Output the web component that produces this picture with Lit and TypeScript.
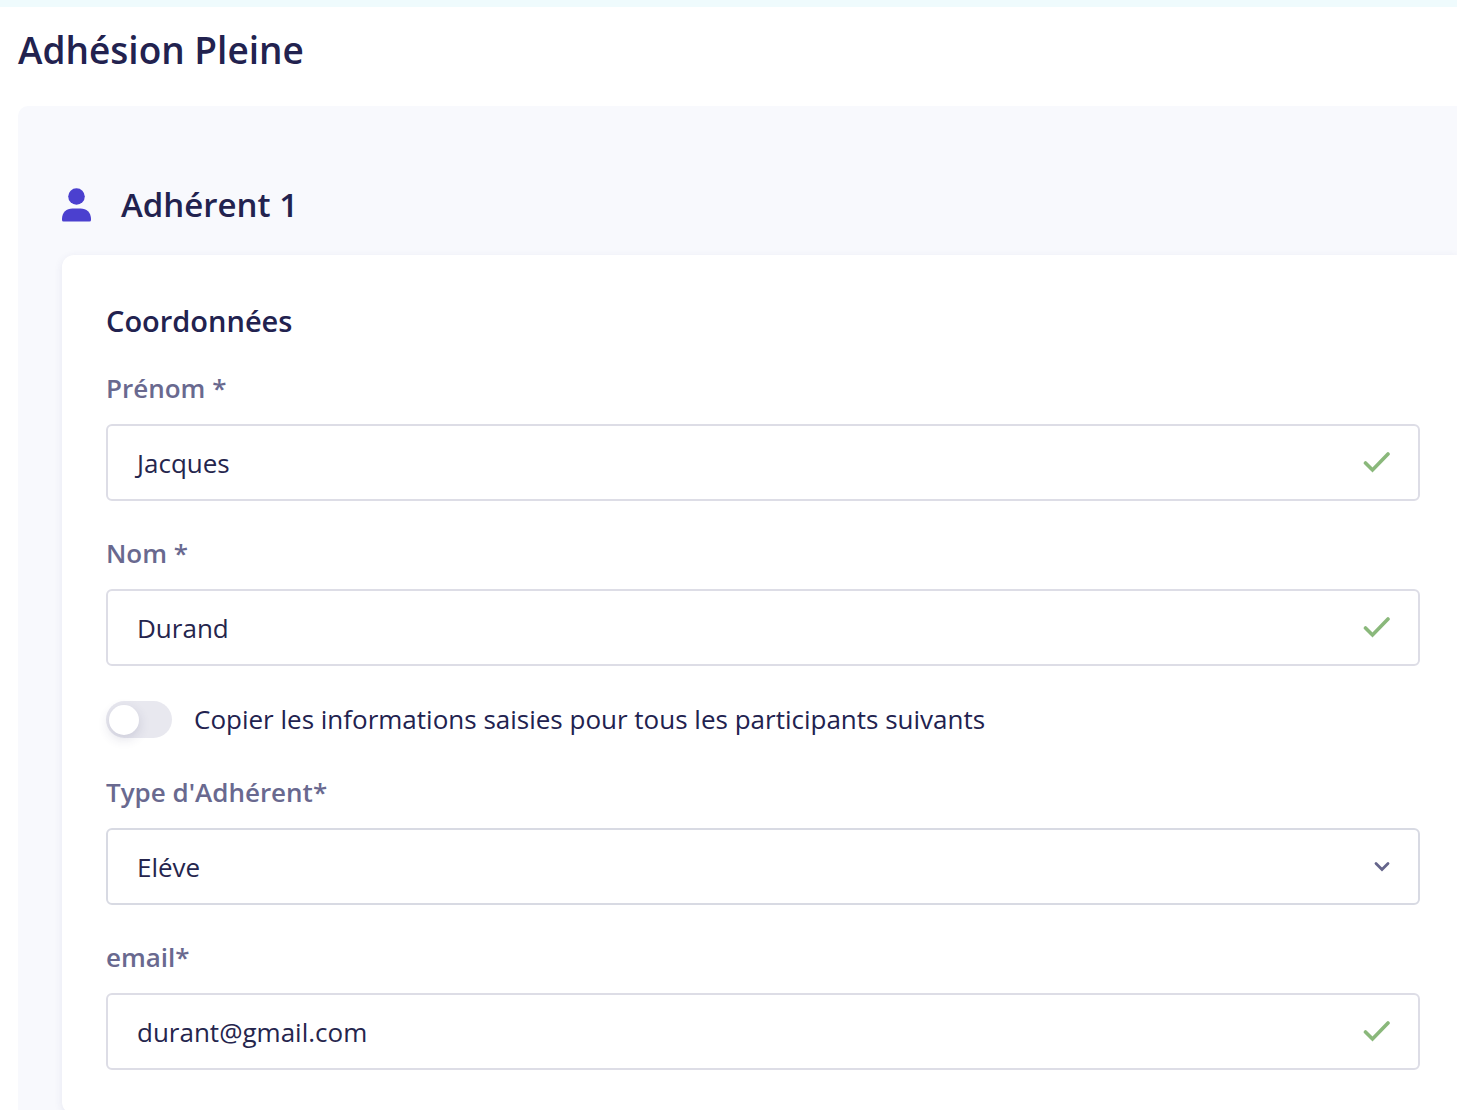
import { LitElement, html, css } from "lit";
import { customElement, property } from "lit/decorators.js";

@customElement("text-field")
class TextField extends LitElement {
  @property() label = "";
  @property() value = "";
  @property() type = "text";

  static styles = css`
    :host {
      display: block;
    }
    .label {
      display: block;
      margin-bottom: 18px;
      color: #69698f;
      font-weight: 600;
      line-height: 35px;
    }
    .box {
      display: flex;
      align-items: center;
      box-sizing: border-box;
      height: 77px;
      padding: 0 27px 0 25px;
      border: 2px solid #dddde6;
      border-radius: 6px;
      background: #fff;
    }
    .input {
      flex: 1;
      min-width: 0;
      padding: 0;
      border: 0;
      outline: 0;
      background: transparent;
      color: #25254d;
      font: inherit;
      line-height: 36px;
      text-indent: 4px;
    }
    .check {
      flex: none;
      width: 28px;
      height: 28px;
    }
  `;

  render() {
    return html`
      <label class="label" for="input">${this.label}</label>
      <div class="box">
        <input class="input" id="input" type=${this.type} .value=${this.value} />
        <svg class="check" viewBox="0 0 28 28" aria-hidden="true">
          <path
            d="M2.5 14 L9.5 21 L25 5"
            fill="none"
            stroke="#8ab87b"
            stroke-width="3.6"
            stroke-linecap="round"
          />
        </svg>
      </div>
    `;
  }
}

@customElement("select-field")
class SelectField extends LitElement {
  @property() label = "";
  @property({ attribute: false }) options: string[] = [];

  static styles = css`
    :host {
      display: block;
    }
    .label {
      display: block;
      margin-bottom: 18px;
      color: #69698f;
      font-weight: 600;
      line-height: 35px;
    }
    .box {
      display: grid;
      align-items: center;
    }
    .select {
      grid-area: 1 / 1;
      appearance: none;
      box-sizing: border-box;
      width: 100%;
      height: 77px;
      padding: 0 60px 0 29px;
      border: 2px solid #d8dae3;
      border-radius: 6px;
      background: #fff;
      color: #25254d;
      font: inherit;
    }
    .chevron {
      grid-area: 1 / 1;
      justify-self: end;
      width: 16px;
      height: 16px;
      margin-right: 30px;
      pointer-events: none;
    }
  `;

  render() {
    return html`
      <label class="label" for="select">${this.label}</label>
      <div class="box">
        <select class="select" id="select">
          ${this.options.map((o) => html`<option>${o}</option>`)}
        </select>
        <svg class="chevron" viewBox="0 0 16 16" aria-hidden="true">
          <path
            d="M2 4.5 L8 10.5 L14 4.5"
            fill="none"
            stroke="#65658b"
            stroke-width="2.8"
            stroke-linecap="round"
          />
        </svg>
      </div>
    `;
  }
}

@customElement("app-root")
class AppRoot extends LitElement {
  static styles = css`
    :host {
      display: block;
      overflow: hidden;
      min-height: 100vh;
      background: #fff;
      color: #22224f;
      font-family: "Open Sans", "Noto Sans", sans-serif;
      font-size: 26px;
    }
    .strip {
      height: 7px;
      background: #effbfd;
    }
    .title {
      margin: 0;
      padding: 18px 18px 31px;
      font-size: 37px;
      font-weight: 600;
      line-height: 50px;
    }
    .panel {
      margin-left: 18px;
      padding: 76px 0 44px 44px;
      border-top-left-radius: 10px;
      background: #f8f9fd;
    }
    .person {
      display: flex;
      align-items: center;
      gap: 30px;
      margin-bottom: 27px;
    }
    .avatar {
      width: 29px;
      height: 34px;
    }
    .name {
      margin: 0;
      font-size: 33px;
      font-weight: 600;
      line-height: 46px;
    }
    .card {
      display: flex;
      flex-direction: column;
      gap: 35px;
      padding: 44px 37px 44px 44px;
      border-radius: 12px 0 0 12px;
      background: #fff;
      box-shadow: 0 2px 8px rgba(60, 60, 120, 0.09);
    }
    .section {
      margin: 0 0 -7px;
      font-size: 29px;
      font-weight: 600;
      line-height: 44px;
    }
    .copy {
      display: flex;
      align-items: flex-start;
      gap: 22px;
      min-height: 39px;
      line-height: 37px;
    }
    .toggle {
      appearance: none;
      display: flex;
      align-items: center;
      box-sizing: border-box;
      width: 66px;
      height: 37px;
      margin: 0;
      padding: 3px;
      border-radius: 19px;
      background: #e8e8ef;
    }
    .toggle::before {
      content: "";
      width: 30px;
      height: 30px;
      border-radius: 50%;
      background: #fff;
      box-shadow: 0 4px 12px rgba(50, 50, 100, 0.16);
    }
    .toggle:checked {
      justify-content: flex-end;
      background: #4b40cf;
    }
  `;

  render() {
    return html`
      <div class="strip"></div>
      <main>
        <h1 class="title">Adhésion Pleine</h1>
        <section class="panel">
          <header class="person">
            <svg class="avatar" viewBox="0.5 0 29 34" aria-hidden="true">
              <circle cx="15" cy="8.5" r="8.3" fill="#4b40cf" />
              <path
                d="M2 33.5 Q0.5 33.5 0.5 32 V31 C0.5 24.5 5 20.5 11 20.5 H19 C25 20.5 29.5 24.5 29.5 31 V32 Q29.5 33.5 28 33.5 Z"
                fill="#4b40cf"
              />
            </svg>
            <h2 class="name">Adhérent 1</h2>
          </header>
          <form class="card">
            <h3 class="section">Coordonnées</h3>
            <text-field label="Prénom *" value="Jacques"></text-field>
            <text-field label="Nom *" value="Durand"></text-field>
            <div class="copy">
              <input class="toggle" id="copy" type="checkbox" role="switch" />
              <label for="copy">Copier les informations saisies pour tous les participants suivants</label>
            </div>
            <select-field label="Type d'Adhérent*" .options=${["Eléve"]}></select-field>
            <text-field label="email*" type="email" value="durant@gmail.com"></text-field>
          </form>
        </section>
      </main>
    `;
  }
}
